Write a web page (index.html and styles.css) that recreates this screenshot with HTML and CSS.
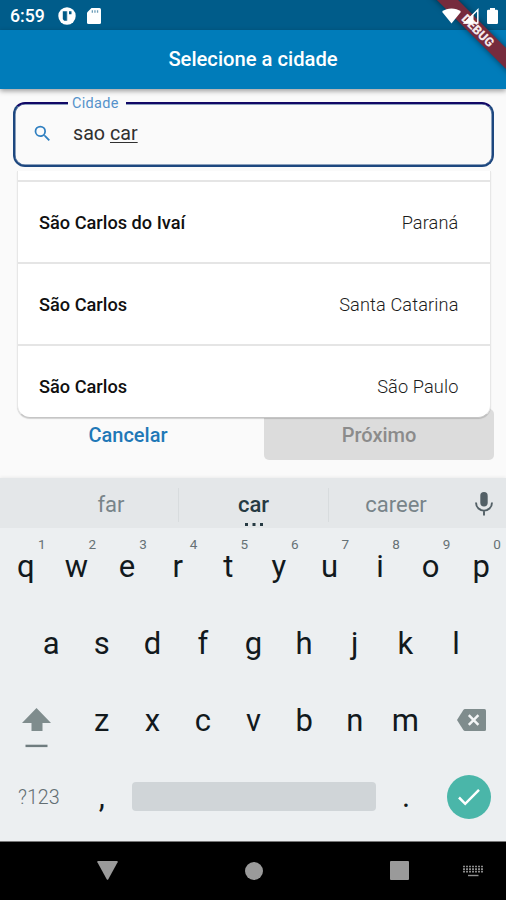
FILE: index.html
```html
<!DOCTYPE html>
<html lang="pt-BR">
<head>
<meta charset="utf-8">
<title>Selecione a cidade</title>
<link rel="stylesheet" href="styles.css">
</head>
<body>
<div class="screen">
  <div class="debug-clip"><div class="debug">DEBUG</div></div>
  <div class="status">
    <span class="clock">6:59</span>
    <svg class="app-dot" viewBox="0 0 18 18"><circle cx="9" cy="9" r="8.700" fill="#fff"/><path d="M4.800 4.200h3.400v9.600H6.300A5 5 0 0 1 4.800 12z" fill="#005b88"/><path d="M8.200 4.200h1v9.600h-1zM11 4.200h2.500v3H11z" fill="#005b88"/></svg>
    <svg class="sd" viewBox="0 0 14 16"><path d="M4.500 0H12.500Q14 0 14 1.500V14.500Q14 16 12.500 16H1.500Q0 16 0 14.500V4.500z" fill="#fff"/><path d="M4.700 2.200h1.300v2.500H4.700zM7.300 2.200h1.300v2.500H7.300zM9.900 2.200h1.300v2.500H9.900z" fill="#6c9db8"/></svg>
    <span class="grow"></span>
    <svg class="wifi" viewBox="0 0 20 16"><path d="M0 3.500C5.500-1.100 14.500-1.100 20 3.500L10 16z" fill="#fff"/></svg>
    <svg class="signal" viewBox="0 0 16 16"><path d="M14.800 1.800V15H1.500z" fill="none" stroke="#fff" stroke-width="1.500"/><path d="M10.500 6v9.500H1z" fill="#fff"/></svg>
    <svg class="battery" viewBox="0 0 11 16"><path d="M3 0h5v1.800h1.800Q11 1.800 11 3v11.800Q11 16 9.800 16H1.200Q0 16 0 14.800V3Q0 1.800 1.200 1.800H3z" fill="#fff"/></svg>
  </div>
  <header class="appbar"><h1>Selecione a cidade</h1></header>
  <main class="content">
    <div class="field">
      <span class="label">Cidade</span>
      <svg class="search" viewBox="0 0 24 24"><path d="M15.500 14h-.79l-.28-.27A6.470 6.470 0 0 0 16 9.500 6.500 6.500 0 1 0 9.500 16c1.610 0 3.090-.59 4.230-1.570l.27.28v.79l5 4.990L20.490 19zm-6 0A4.500 4.500 0 1 1 14 9.500 4.490 4.490 0 0 1 9.500 14z" fill="#2f7fc0"/></svg>
      <span class="value">sao <span class="composing">car</span></span>
    </div>
    <div class="options">
      <div class="option"><b>São Carlos do Ivaí</b><span>Paraná</span></div>
      <div class="option"><b>São Carlos</b><span>Santa Catarina</span></div>
      <div class="option"><b>São Carlos</b><span>São Paulo</span></div>
    </div>
    <div class="actions">
      <div class="cancel">Cancelar</div>
      <div class="next">Próximo</div>
    </div>
  </main>
  <section class="keyboard">
    <div class="suggest">
      <span class="word first">far</span>
      <span class="word current">car</span>
      <span class="word last">career</span>
      <svg class="mic" viewBox="0 0 18 24"><rect x="5.300" y="0" width="7.400" height="14.500" rx="3.700" fill="#536066"/><path d="M1 10.500C1 21.300 17 21.300 17 10.500M9 18.500V23.500" fill="none" stroke="#536066" stroke-width="1.900"/></svg>
    </div>
    <div class="row top">
      <span class="key">q<i>1</i></span><span class="key">w<i>2</i></span><span class="key">e<i>3</i></span><span class="key">r<i>4</i></span><span class="key">t<i>5</i></span><span class="key">y<i>6</i></span><span class="key">u<i>7</i></span><span class="key">i<i>8</i></span><span class="key">o<i>9</i></span><span class="key">p<i>0</i></span>
    </div>
    <div class="row home">
      <span class="key">a</span><span class="key">s</span><span class="key">d</span><span class="key">f</span><span class="key">g</span><span class="key">h</span><span class="key">j</span><span class="key">k</span><span class="key">l</span>
    </div>
    <div class="row lower">
      <span class="wide"><svg class="shift" viewBox="0 0 29 40"><path d="M14.500 0L29 15H20.500V23H9.500V15H0z" fill="#7f8c8d"/><path d="M3.500 36.700h22v2.400h-22z" fill="#6f7c7f"/></svg></span>
      <span class="key">z</span><span class="key">x</span><span class="key">c</span><span class="key">v</span><span class="key">b</span><span class="key">n</span><span class="key">m</span>
      <span class="wide back"><svg class="delete" viewBox="0 0 29 22"><path d="M8 0H27.500Q29 0 29 1.500V20.500Q29 22 27.500 22H8Q7 22 6.300 21L0 11 6.300 1Q7 0 8 0z" fill="#7f8c8d"/><path d="M11.800 6.200l9.600 9.600M21.400 6.200l-9.600 9.600" stroke="#f3f5f6" stroke-width="2.500"/></svg></span>
    </div>
    <div class="row bottom">
      <span class="symbols">?123</span>
      <span class="key">,</span>
      <span class="space"></span>
      <span class="key dot">.</span>
      <span class="enter"><svg viewBox="0 0 22 18"><path d="M1 9.500L7.200 15.800 21 1.800" fill="none" stroke="#fff" stroke-width="2.500"/></svg></span>
    </div>
  </section>
  <nav class="navbar">
    <svg class="nav-back" viewBox="0 0 21 19"><path d="M1.200 0H19.800Q21.300 0 20.600 1.300L11.300 18.200Q10.500 19.400 9.700 18.200L.4 1.300Q-.3 0 1.200 0z" fill="#9a9a9a"/></svg>
    <span class="nav-home"></span>
    <span class="nav-recent"></span>
    <svg class="nav-keys" viewBox="0 0 20 12"><path d="M0 1.500h20M0 4.200h20M0 6.700h20" stroke="#8a8a8a" stroke-width="1.700" stroke-dasharray="2 1"/><path d="M5 10.500h10.500" stroke="#8f8f8f" stroke-width="1.400"/></svg>
  </nav>
</div>
</body>
</html>
```
FILE: styles.css
```css
* { box-sizing: border-box; }
body { margin: 0; font-family: Roboto, "Liberation Sans", sans-serif; }
svg { display: block; flex: none; overflow: visible; }
.screen { position: relative; width: 506px; height: 900px; overflow: hidden; display: flex; flex-direction: column; background: #fafafa; }

.debug-clip { position: absolute; z-index: 2; top: 0; right: 0; width: 80px; height: 80px; overflow: hidden; }
.debug { position: absolute; left: -8px; top: 22.500px; width: 120px; height: 15px; line-height: 15px; transform: rotate(45deg); background: #762b3d; box-shadow: 0 0 6px rgba(0,0,0,.5); color: #f4e9ec; font-size: 12.500px; font-weight: 900; text-align: center; }

.status { height: 30px; flex: none; display: flex; align-items: center; padding: 1px 8.500px 0 10px; background: #005c8a; color: #fff; }
.clock { width: 48px; font-size: 17.700px; font-weight: 500; line-height: 30px; }
.app-dot { width: 18px; height: 18px; }
.sd { width: 14px; height: 16px; margin-left: 11px; }
.grow { flex: 1; }
.wifi, .signal, .battery { position: relative; z-index: 3; }
.wifi { width: 19px; height: 16px; }
.signal { width: 16px; height: 16px; margin-left: 2px; }
.battery { width: 11px; height: 16px; margin-left: 8px; }

.appbar { height: 59px; flex: none; display: flex; align-items: center; justify-content: center; padding-bottom: 1px; background: #007cba; box-shadow: 0 2px 5px rgba(0,0,0,.38); z-index: 1; }
.appbar h1 { margin: 0; color: #fff; font-size: 20.200px; font-weight: 500; }

.content { position: relative; flex: 1; padding: 13px 12px 0 13px; display: flex; flex-direction: column; }
.field { position: relative; height: 65px; flex: none; display: flex; align-items: center; padding: 0 0 2px 17px; border: 2px solid #1d477f; border-top-color: #110866; border-radius: 12px; box-shadow: inset 0 0 0 .5px #1d477f; }
.label { position: absolute; left: 53px; top: -9px; padding: 0 7px 0 4px; background: #fafafa; color: #5592ca; font-size: 14.500px; line-height: 18px; letter-spacing: .3px; }
.search { width: 21px; height: 21px; }
.value { margin-left: 20px; color: #303030; font-size: 19.700px; font-weight: 400; line-height: 24px; }
.composing { text-decoration: underline; text-decoration-thickness: 1px; text-underline-offset: 2px; }

.options { position: absolute; z-index: 1; left: 17px; right: 15.500px; top: 82px; height: 247px; overflow: hidden; padding-top: 9px; background: #fff; border: 1px solid #e7e7e7; border-top: 0; border-bottom: 1px solid #c5c5c5; border-radius: 0 0 13px 13px; box-shadow: 0 1px 1px rgba(0,0,0,.16); clip-path: inset(0 -3px -4px -3px); }
.option { height: 82px; display: flex; align-items: center; justify-content: space-between; padding: 1.500px 31px 0 21px; border-top: 2px solid #e5e5e5; font-size: 18.200px; color: #1b1b1b; }
.option b { font-weight: 500; color: #101010; }
.option span { font-weight: 300; letter-spacing: .12px; }

.actions { display: flex; justify-content: space-between; margin-top: 242px; padding-left: 5px; font-size: 20px; font-weight: 500; line-height: 52px; text-align: center; }
.cancel { width: 220px; color: #1f78b7; }
.next { width: 230px; height: 51px; border-radius: 5px; background: #dcdcdc; color: #8b8b8b; }

.keyboard { height: 363px; flex: none; background: #eceff1; color: #12191d; box-shadow: 0 -1px 3px rgba(0,0,0,.06); }
.suggest { height: 50px; display: flex; align-items: center; padding-top: 3px; background: #e4e7e9; font-size: 22px; color: #788489; }
.word { text-align: center; line-height: 34px; }
.first { width: 178px; padding-left: 44px; }
.current { position: relative; width: 151px; border: solid #d8dcde; border-width: 0 1px; color: #263a43; font-weight: 500; }
.current::after { content: ""; position: absolute; left: 65.500px; bottom: -4px; width: 3px; height: 3px; background: currentColor; box-shadow: 7.500px 0 currentColor, 15px 0 currentColor; }
.last { width: 134px; }
.mic { width: 18px; height: 24px; margin: -2px 0 0 12px; }

.row { height: 77px; display: flex; }
.key { position: relative; width: 50.600px; flex: none; padding-left: 1.200px; text-align: center; font-size: 31px; line-height: 78px; }
.key i { position: absolute; right: 5px; top: 8px; font-size: 13.500px; font-style: normal; line-height: 16px; color: #667175; }
.home { padding-left: 25.300px; }
.lower { align-items: center; }
.lower .key { line-height: 80px; }
.wide { width: 75.900px; display: flex; padding-left: 21.500px; }
.shift { width: 29px; height: 40px; margin-top: 14px; }
.back { padding-left: 26.500px; }
.delete { width: 29px; height: 22px; margin-top: -2px; }
.bottom { height: 75px; align-items: center; }
.symbols { width: 76px; padding: 1px 0 0 18px; font-size: 19.700px; color: #636e73; font-weight: 300; }
.space { width: 244px; height: 29px; margin-left: 5.500px; border-radius: 4px; background: #d0d5d8; }
.dot { margin-left: 4px; }
.enter { width: 44px; height: 44px; margin-left: 16px; border-radius: 50%; background: #4ab6a9; display: flex; align-items: center; justify-content: center; }
.enter svg { width: 22px; height: 18px; }

.navbar { height: 59px; flex: none; display: flex; align-items: center; padding: 0 0 1px 97px; background: #000; border-top: 1px solid #777; }
.nav-back { width: 21px; height: 19px; }
.nav-home { width: 18px; height: 18px; margin-left: 127px; border-radius: 50%; background: #9a9a9a; }
.nav-recent { width: 19px; height: 19px; margin-left: 127px; border-radius: 1px; background: #9a9a9a; }
.nav-keys { width: 20px; height: 12px; margin-left: 54px; }
```
